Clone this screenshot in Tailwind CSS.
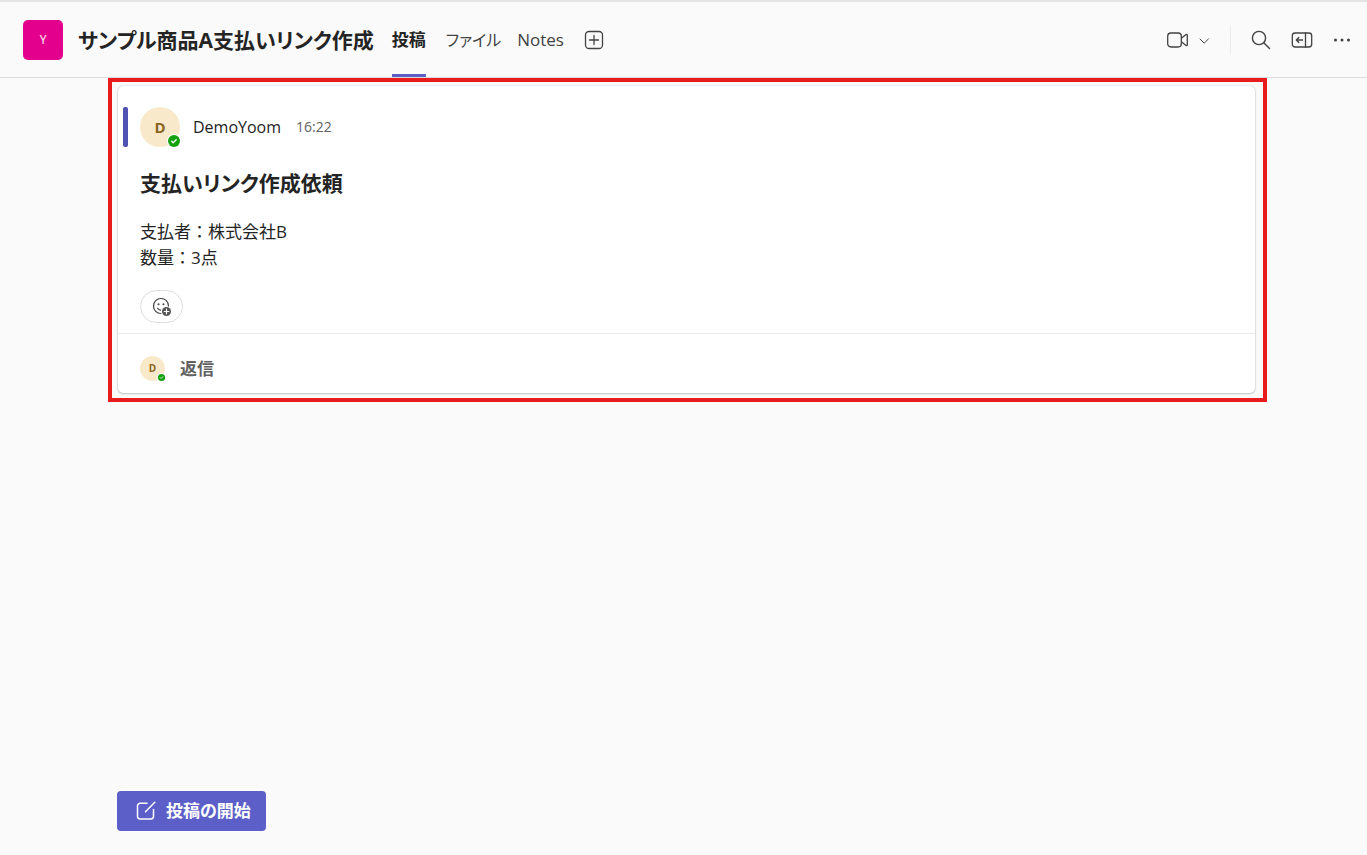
<!DOCTYPE html>
<html lang="ja">
<head>
<meta charset="utf-8">
<meta name="viewport" content="width=device-width, initial-scale=1">
<title>サンプル商品A支払いリンク作成</title>
<script src="https://cdn.jsdelivr.net/npm/@tailwindcss/browser@4"></script>
</head>
<body class="flex min-h-screen flex-col bg-[#fafafa] font-['Open_Sans','Noto_Sans_CJK_JP',sans-serif] text-[#242424]">
  <header class="flex h-[78px] items-stretch border-t-2 border-b border-t-[#e4e4e4] border-b-[#dcdcdc] pr-4 pl-[23px] [font-feature-settings:'palt']">
    <div class="flex items-center gap-[15px]">
      <div class="flex size-10 items-center justify-center rounded-[5px] bg-[#e3008c] text-xs text-white">Y</div>
      <h1 class="text-[21px] leading-8 font-bold whitespace-nowrap">サンプル商品A支払いリンク作成</h1>
    </div>
    <nav class="ml-[18px] flex items-stretch text-[17px] text-[#424242]">
      <a href="#posts" aria-current="page" class="flex items-center border-b-3 border-[#5b5fc7] pt-1 font-bold whitespace-nowrap text-[#242424]">投稿</a>
      <a href="#files" class="ml-5 flex items-center pt-px text-base whitespace-nowrap">ファイル</a>
      <a href="#notes" class="ml-4 flex items-center pt-px whitespace-nowrap">Notes</a>
      <button type="button" aria-label="タブを追加" class="ml-5 flex items-center">
        <svg class="size-5" viewBox="0 0 20 20" fill="none" stroke="currentColor" stroke-width="1.3" stroke-linecap="round"><rect x="1.5" y="1.5" width="17" height="17" rx="3.5"/><path d="M10 5.5v9M5.5 10h9"/></svg>
      </button>
    </nav>
    <div class="ml-auto flex items-center text-[#424242]">
      <button type="button" aria-label="ビデオ会議" class="mr-2">
        <svg class="h-5 w-6" viewBox="0 0 24 20" fill="none" stroke="currentColor" stroke-width="1.3" stroke-linejoin="round"><rect x="1.7" y="3" width="13.6" height="14" rx="3.2"/><path d="M15.300 8.200l4.800-3.600c.6-.4 1.200-.1 1.200.5v9.800c0 .6-.6.9-1.200.5l-4.800-3.600"/></svg>
      </button>
      <button type="button" aria-label="会議のオプション">
        <svg class="size-3" viewBox="0 0 12 12" fill="none" stroke="currentColor" stroke-width="1" stroke-linecap="round" stroke-linejoin="round"><path d="M2 5l4.200 4.200L10.400 5"/></svg>
      </button>
      <div class="mx-5 h-[30px] w-px bg-[#ececec]"></div>
      <div class="flex items-center gap-5">
        <button type="button" aria-label="検索">
          <svg class="size-5" viewBox="0 0 20 20" fill="none" stroke="currentColor" stroke-width="1.4" stroke-linecap="round"><circle cx="8" cy="8" r="6.600"/><path d="M12.800 12.800l5.700 5.700"/></svg>
        </button>
        <button type="button" aria-label="ウィンドウを開く">
          <svg class="h-5 w-[22px]" viewBox="0 0 22 20" fill="none" stroke="currentColor" stroke-width="1.3" stroke-linecap="round" stroke-linejoin="round"><rect x="1.300" y="3" width="19.400" height="14" rx="2.800"/><path d="M14.500 3v14M11.500 10H5.500M7.800 7.500L5.300 10l2.500 2.500"/></svg>
        </button>
        <button type="button" aria-label="その他のオプション">
          <svg class="h-5 w-[18px]" viewBox="0 0 18 20" fill="currentColor"><circle cx="2.500" cy="10" r="1.500"/><circle cx="9" cy="10" r="1.500"/><circle cx="15.500" cy="10" r="1.500"/></svg>
        </button>
      </div>
    </div>
  </header>

  <main class="mr-[100px] ml-[108px] flex flex-1 flex-col items-start justify-between pb-6">
    <section class="w-full border-4 border-[#e81c1c] pt-1 pr-2 pb-[5px] pl-[6px]">
      <article class="rounded-[5px] bg-white shadow-[0_0_2px_rgba(0,0,0,0.2),0_1px_2px_rgba(0,0,0,0.18)]">
        <div class="px-[22px] pt-[21px] pb-[10px]">
          <div class="relative flex items-center">
            <div class="absolute top-0 -left-[17px] h-10 w-[5px] rounded-[2px] bg-[#4f52b2]"></div>
            <div class="relative flex size-10 items-center justify-center rounded-full bg-[#f8e9cb] text-[15px] font-bold text-[#8a6420]">D
              <svg class="absolute -right-[1px] -bottom-[1px] size-[14px]" viewBox="0 0 14 14"><circle cx="7" cy="7" r="7" fill="#fff"/><circle cx="7" cy="7" r="6" fill="#13a10e"/><path d="M4.700 7.200l1.500 1.500 3-3" fill="none" stroke="#fff" stroke-width="1.300" stroke-linecap="round" stroke-linejoin="round"/></svg>
            </div>
            <span class="ml-[13px] text-base">DemoYoom</span>
            <time class="ml-[15px] text-sm text-[#616161]">16:22</time>
          </div>
          <h2 class="mt-5 text-[21px] leading-8 font-bold [font-feature-settings:'palt']">支払いリンク作成依頼</h2>
          <p class="mt-5 text-[17px] leading-[26px]">支払者：株式会社B<br>数量：3点</p>
          <button type="button" aria-label="リアクションを追加" class="mt-[19px] flex h-[33px] w-[43px] items-center justify-center rounded-full border border-[#dcdcdc] text-[#424242]">
            <svg class="size-5" viewBox="0 0 20 20" fill="none" stroke="currentColor" stroke-width="1.200" stroke-linecap="round"><circle cx="9" cy="9" r="7.500"/><path d="M5.600 11.200c.9 1.400 2 2 3.400 2"/><circle cx="6.500" cy="7.300" r="1" fill="currentColor" stroke="none"/><circle cx="11.500" cy="7.300" r="1" fill="currentColor" stroke="none"/><circle cx="14.500" cy="14.500" r="5.500" fill="#fff" stroke="none"/><circle cx="14.500" cy="14.500" r="4.500" fill="#555" stroke="none"/><path d="M14.500 12.200v4.600M12.200 14.500h4.600" stroke="#fff"/></svg>
          </button>
        </div>
        <div class="flex items-center border-t border-[#ebebeb] px-[22px] pt-[22px] pb-3">
          <div class="relative flex size-[25px] items-center justify-center rounded-full bg-[#f8e9cb] text-[10px] font-bold text-[#8a6420]">D
            <svg class="absolute -right-[1px] -bottom-[1px] size-[9px]" viewBox="0 0 10 10"><circle cx="5" cy="5" r="5" fill="#fff"/><circle cx="5" cy="5" r="4" fill="#13a10e"/><path d="M3.500 5.100l1 1 2-2" fill="none" stroke="#fff" stroke-width=".9" stroke-linecap="round"/></svg>
          </div>
          <button type="button" class="ml-[15px] text-[17px] leading-6 font-bold text-[#616161]">返信</button>
        </div>
      </article>
    </section>

    <button type="button" class="ml-[9px] flex h-10 items-center gap-[10px] rounded-[4px] bg-[#5b5fc7] pr-[15px] pl-[19px] text-[17px] font-bold text-white [font-feature-settings:'palt']">
      <svg class="size-5" viewBox="0 0 20 20" fill="none" stroke="currentColor" stroke-width="1.500" stroke-linecap="round"><path d="M11 2.200H4.200a2.700 2.700 0 0 0-2.700 2.700v10.400A2.700 2.700 0 0 0 4.200 18h10.600a2.700 2.700 0 0 0 2.700-2.700V8.500M9.500 10.800L18.800 1.200"/></svg>
      投稿の開始
    </button>
  </main>
</body>
</html>
